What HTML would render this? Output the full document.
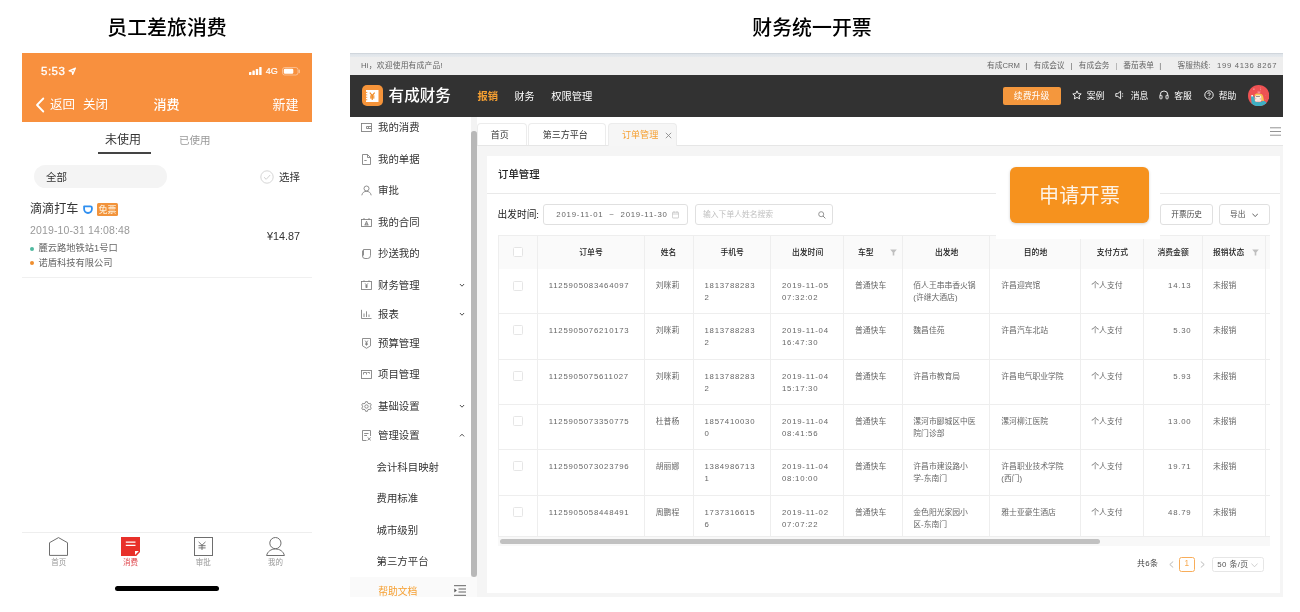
<!DOCTYPE html>
<html lang="zh-CN">
<head>
<meta charset="utf-8">
<title>有成财务</title>
<style>
*{box-sizing:border-box;margin:0;padding:0}
html,body{width:1300px;height:612px;overflow:hidden;background:#fff}
body{position:relative;font-family:"Liberation Sans","Noto Sans CJK SC",sans-serif;color:#333;-webkit-font-smoothing:antialiased}
.abs{position:absolute;white-space:nowrap}
.title{position:absolute;top:12.5px;font-size:19.9px;font-weight:500;color:#000;line-height:30px;text-align:center;white-space:nowrap}
/* phone */
#layer{position:absolute;left:0;top:0;width:1300px;height:612px;will-change:transform}
#phone{position:absolute;left:22px;top:53px;width:290px;height:559px;background:#fff}
#phead{position:absolute;left:0;top:0;width:290px;height:68.5px;background:#f8903e}
#phone .t{position:absolute;white-space:nowrap;line-height:1}
/* web */
#web{position:absolute;left:350px;top:53px;width:933px;height:544px;background:#f5f5f5;overflow:hidden}
#topstrip{position:absolute;left:0;top:0;width:933px;height:22px;background:linear-gradient(#c6ccd3 0,#dfe4e9 1.2px,#e5e9ed 3.8px,#eee 4.2px)}
#nav{position:absolute;left:0;top:22px;width:933px;height:42px;background:#323232}
#side{position:absolute;left:0;top:64px;width:126.5px;height:480px;background:#fff}
#web .t{position:absolute;white-space:nowrap;line-height:1}
.c{font-size:7.8px;color:#666;line-height:12px !important;white-space:nowrap}
.mi{position:absolute;left:29px;font-size:10.5px;color:#333;white-space:nowrap;line-height:1}
.sub{left:28px}
</style>
</head>
<body>
<div id="layer">
<div class="title" style="left:67px;width:200px">员工差旅消费</div>
<div class="title" style="left:712px;width:200px">财务统一开票</div>

<div id="phone">
  <div id="phead"></div>
  <div class="t" style="left:19px;top:13.2px;font-size:11.5px;color:#fff;-webkit-text-stroke:.3px #fff;letter-spacing:.5px">5:53</div>
  <svg class="abs" style="left:46.3px;top:13.8px" width="8.5" height="8.5" viewBox="0 0 8 8"><path d="M7 1 L1 3.6 L3.8 4.2 L4.4 7 Z" fill="#fff" fill-opacity=".25" stroke="#fff" stroke-width="1.15" stroke-linejoin="round"/></svg>
  <svg class="abs" style="left:227px;top:13px" width="14" height="9" viewBox="0 0 14 9"><rect x="0" y="6" width="2.4" height="3" rx=".6" fill="#fff"/><rect x="3.4" y="4.5" width="2.4" height="4.5" rx=".6" fill="#fff"/><rect x="6.8" y="3" width="2.4" height="6" rx=".6" fill="#fff"/><rect x="10.2" y="1" width="2.4" height="8" rx=".6" fill="#fff"/></svg>
  <div class="t" style="left:243.8px;top:14.3px;font-size:9px;-webkit-text-stroke:.2px #fff;color:#fff">4G</div>
  <svg class="abs" style="left:260px;top:14px" width="19" height="9" viewBox="0 0 19 9"><rect x=".5" y=".5" width="15.5" height="7.5" rx="2.2" fill="none" stroke="#fff" stroke-opacity=".4" stroke-width="1"/><rect x="1.8" y="1.8" width="9.5" height="4.9" rx="1.2" fill="#fff"/><path d="M17.3 3 v2.6" stroke="#fff" stroke-opacity=".45" stroke-width="1.2" stroke-linecap="round"/></svg>
  <svg class="abs" style="left:13px;top:44px" width="10" height="16" viewBox="0 0 10 16"><path d="M8.3 1.5 L2 8 L8.3 14.5" fill="none" stroke="#fff" stroke-width="1.8" stroke-linecap="round" stroke-linejoin="round"/></svg>
  <div class="t" style="left:28px;top:46px;font-size:12.5px;color:#fff">返回</div>
  <div class="t" style="left:61px;top:46px;font-size:12.5px;color:#fff">关闭</div>
  <div class="t" style="left:131.5px;top:45.3px;font-size:13px;color:#fff;font-weight:500">消费</div>
  <div class="t" style="left:250.5px;top:45.3px;font-size:13px;color:#fff">新建</div>

  <div class="t" style="left:83px;top:81px;font-size:12px;color:#333">未使用</div>
  <div class="abs" style="left:76px;top:99.4px;width:53px;height:1.3px;background:#444"></div>
  <div class="t" style="left:157px;top:82px;font-size:10.5px;color:#999">已使用</div>

  <div class="abs" style="left:12px;top:112px;width:133px;height:23px;border-radius:12px;background:#f4f4f4"></div>
  <div class="t" style="left:24px;top:119px;font-size:10.5px;color:#333">全部</div>
  <svg class="abs" style="left:238px;top:117px" width="14" height="14" viewBox="0 0 14 14"><circle cx="7" cy="7" r="6.2" fill="none" stroke="#ccc" stroke-width=".8"/><path d="M4 7.2 L6.2 9.3 L10.2 5" fill="none" stroke="#ccc" stroke-width=".9"/></svg>
  <div class="t" style="left:257px;top:119px;font-size:10.5px;color:#333">选择</div>

  <div class="t" style="left:8px;top:149.9px;font-size:12.1px;color:#333">滴滴打车</div>
  <svg class="abs" style="left:61.3px;top:151.6px" width="10" height="9" viewBox="0 0 10 9"><path d="M1.1 1.3 H7.4 A1.5 1.5 0 0 1 8.9 2.8 V4.1 A3.9 3.9 0 0 1 1.1 4.1 Z" fill="none" stroke="#2f8ff0" stroke-width="1.8" stroke-linejoin="round"/></svg>
  <div class="abs" style="left:74.5px;top:150.2px;width:21.6px;height:12.6px;background:#f2933b;border-radius:1.5px"></div>
  <div class="t" style="left:76.5px;top:152.7px;font-size:9px;font-weight:500;color:#fdebd2">免票</div>
  <div class="t" style="left:8px;top:172.2px;font-size:10.5px;letter-spacing:.13px;color:#999">2019-10-31 14:08:48</div>
  <div class="abs" style="left:8px;top:193.5px;width:4px;height:4px;border-radius:2px;background:#4fb99f"></div>
  <div class="t" style="left:16.5px;top:191px;font-size:9.25px;color:#666">麓云路地铁站1号口</div>
  <div class="abs" style="left:8px;top:208px;width:4px;height:4px;border-radius:2px;background:#ef8e2f"></div>
  <div class="t" style="left:16.5px;top:205.5px;font-size:9.25px;color:#666">诺盾科技有限公司</div>
  <div class="t" style="right:12px;top:178px;font-size:10.8px;color:#333">¥14.87</div>
  <div class="abs" style="left:0;top:224px;width:290px;height:1px;background:#f0f0f0"></div>

  <div class="abs" style="left:0;top:479px;width:290px;height:1px;background:#eee"></div>
  <svg class="abs" style="left:26.8px;top:484px" width="19" height="19" viewBox="0 0 19 19"><path d="M.5 5.7 L9.5 .6 L18.5 5.7 V18.4 H.5 Z" fill="none" stroke="#6e6e6e" stroke-width="1"/></svg>
  <div class="t" style="left:29.2px;top:506px;font-size:7.5px;color:#999">首页</div>
  <svg class="abs" style="left:99px;top:484px" width="19" height="19.3" viewBox="0 0 19 19.3"><path d="M0 0 H19 V15 L15 19.3 H0 Z" fill="#e8302a"/><path d="M14 14 H17.9 L14 17.9 Z" fill="#fff"/><path d="M4.8 5.2 H14.5 M4.8 8.4 H14.5" stroke="#fff" stroke-width="1.3"/></svg>
  <div class="t" style="left:101px;top:506px;font-size:7.5px;color:#df444a">消费</div>
  <svg class="abs" style="left:171.7px;top:484px" width="19" height="19" viewBox="0 0 19 19"><rect x=".5" y=".5" width="18" height="18" fill="none" stroke="#6e6e6e" stroke-width="1"/><path d="M4.6 4.9 L8 8.2 L11.5 4.9 M4.5 8.7 H11.6 M4.5 10.9 H11.6 M8 8.2 V13" fill="none" stroke="#666" stroke-width=".9"/></svg>
  <div class="t" style="left:173.8px;top:506px;font-size:7.5px;color:#999">审批</div>
  <svg class="abs" style="left:244px;top:484px" width="19" height="19" viewBox="0 0 19 19"><circle cx="9.4" cy="6.1" r="5.6" fill="none" stroke="#6e6e6e" stroke-width="1"/><path d="M.6 18.5 C1.6 14.4 5 12 9.4 12 C13.9 12 17.4 14.4 18.4 18.5 Z" fill="#fff" stroke="#6e6e6e" stroke-width="1" stroke-linejoin="round"/></svg>
  <div class="t" style="left:246px;top:506px;font-size:7.5px;color:#999">我的</div>
  <div class="abs" style="left:93px;top:533px;width:104px;height:4.5px;border-radius:3px;background:#000"></div>
</div>

<div id="web">
<div id="topstrip"></div>
<div id="nav"></div>
<div class="t" style="left:11.00px;top:9.10px;font-size:7.8px;color:#666;letter-spacing:.18px">Hi，欢迎使用有成产品!</div>
<div class="t" style="left:637.00px;top:9.15px;font-size:7.7px;color:#666;">有成CRM</div>
<div class="t" style="left:675.50px;top:9.15px;font-size:7.7px;color:#666;">|</div>
<div class="t" style="left:683.80px;top:9.15px;font-size:7.7px;color:#666;">有成会议</div>
<div class="t" style="left:720.50px;top:9.15px;font-size:7.7px;color:#666;">|</div>
<div class="t" style="left:728.80px;top:9.15px;font-size:7.7px;color:#666;">有成会务</div>
<div class="t" style="left:765.50px;top:9.15px;font-size:7.7px;color:#666;color:#999;">|</div>
<div class="t" style="left:773.30px;top:9.15px;font-size:7.7px;color:#666;">番茄表单</div>
<div class="t" style="left:809.30px;top:9.15px;font-size:7.7px;color:#666;">|</div>
<div class="t" style="left:827.50px;top:9.15px;font-size:7.7px;color:#666;">客服热线:</div>
<div class="t" style="left:867.00px;top:9.15px;font-size:7.7px;color:#666;letter-spacing:.68px;">199 4136 8267</div>
<div class="abs" style="left:11.50px;top:31.90px;width:21.40px;height:21.30px;background:#f6943a;border-radius:5px"></div>
<svg class="abs" style="left:16px;top:36.7px" width="12.5" height="12.2" viewBox="0 0 13 12.5" preserveAspectRatio="none"><path d="M0 0 H13 V12.5 H0 Z" fill="#fff"/><path d="M4 2.6 L6.5 5.8 L9 2.6 M4.2 6.2 H8.8 M4.2 8 H8.8 M6.5 5.8 V10.3" fill="none" stroke="#f08a24" stroke-width="1.2"/><path d="M0 2.5 h1.3 M0 5 h1.3 M0 7.5 h1.3 M0 10 h1.3" stroke="#f6943a" stroke-width="1"/></svg>
<div class="t" style="left:38.60px;top:34.52px;font-size:15.55px;color:#fff;font-weight:500">有成财务</div>
<div class="t" style="left:127.50px;top:38.95px;font-size:10.3px;color:#f6a032;font-weight:bold">报销</div>
<div class="t" style="left:164.50px;top:39.10px;font-size:10px;color:#fff;">财务</div>
<div class="t" style="left:201.20px;top:38.95px;font-size:10.3px;color:#fff;">权限管理</div>
<div class="abs" style="left:652.50px;top:33.80px;width:58.00px;height:18.20px;background:#f4973d;border-radius:2px"></div>
<div class="t" style="left:663.80px;top:39.35px;font-size:8.9px;color:#fff;">续费升级</div>
<svg class="abs" style="left:721.5px;top:37.3px" width="10" height="10" viewBox="0 0 10 10"><path d="M5 .9 L6.25 3.6 L9.2 3.95 L7 5.95 L7.6 8.9 L5 7.4 L2.4 8.9 L3 5.95 L.8 3.95 L3.75 3.6 Z" fill="none" stroke="#fff" stroke-width=".9" stroke-linejoin="round"/></svg>
<div class="t" style="left:736.80px;top:39.40px;font-size:8.8px;color:#fff;">案例</div>
<svg class="abs" style="left:765px;top:37.3px" width="11" height="10" viewBox="0 0 11 10"><path d="M.8 3.6 H2.8 L5.6 1.2 V8.8 L2.8 6.4 H.8 Z" fill="none" stroke="#fff" stroke-width=".9" stroke-linejoin="round"/><path d="M7.6 3.3 V4.3 M7.6 5.7 V6.7" stroke="#fff" stroke-width=".9"/></svg>
<div class="t" style="left:780.80px;top:39.40px;font-size:8.8px;color:#fff;">消息</div>
<svg class="abs" style="left:809px;top:37.3px" width="10" height="10" viewBox="0 0 10 10"><path d="M1.2 6 V4.8 A3.8 3.8 0 0 1 8.8 4.8 V6" fill="none" stroke="#fff" stroke-width=".9"/><rect x=".9" y="5.3" width="2.1" height="3.5" rx=".6" fill="none" stroke="#fff" stroke-width=".9"/><rect x="7" y="5.3" width="2.1" height="3.5" rx=".6" fill="none" stroke="#fff" stroke-width=".9"/></svg>
<div class="t" style="left:824.30px;top:39.40px;font-size:8.8px;color:#fff;">客服</div>
<svg class="abs" style="left:853.5px;top:37.3px" width="10" height="10" viewBox="0 0 10 10"><circle cx="5" cy="5" r="4.2" fill="none" stroke="#fff" stroke-width=".9"/><path d="M3.7 4 A1.3 1.3 0 1 1 5 5.3 V6.1 M5 7 V7.8" fill="none" stroke="#fff" stroke-width=".8"/></svg>
<div class="t" style="left:868.80px;top:39.40px;font-size:8.8px;color:#fff;">帮助</div>
<svg class="abs" style="left:897.90px;top:31.80px" width="21.3" height="21.3" viewBox="0 0 21.3 21.3"><defs><clipPath id="avc"><circle cx="10.65" cy="10.65" r="10.65"/></clipPath></defs><circle cx="10.65" cy="10.65" r="10.65" fill="#ee5253"/><g clip-path="url(#avc)"><path d="M2.9 11 L6.3 11.6 L7 16.2 C9.5 17.6 13 17.4 15.3 15.8 C17.6 16.3 18.6 17.4 19 18.6 L14.5 22 L7 22 L3.6 18.4 Z" fill="#3eb0c4"/><rect x="3.3" y="10" width="1.7" height="1.4" rx=".5" fill="#fff"/><path d="M6.4 10.8 C6.6 8.9 8.3 8.5 10.2 8.6 C12.8 8.6 14.6 9.3 15.2 11.5 L16 16 L13.4 15.8 L13.2 10.8 Z" fill="#f7c84e"/><rect x="6.9" y="10.2" width="6.5" height="6.6" rx="1.6" fill="#fbeee4"/><path d="M7.9 11.5 H11.9" stroke="#666" stroke-width=".7"/><circle cx="7.6" cy="13.6" r=".85" fill="#f9b9ab"/><circle cx="12.4" cy="13.8" r=".85" fill="#f9b9ab"/><path d="M9.6 14.8 V16.6 M11 14.8 V16.6" stroke="#e8cfc4" stroke-width=".5"/><path d="M9.4 5.7 L10.3 7 L10.9 5.6 L11.6 7 L12.4 5.7 L12.2 8.5 H9.7 Z" fill="#f58c92"/><circle cx="5.9" cy="4.1" r=".7" fill="#f7c4c4"/><circle cx="12.5" cy="2.9" r=".45" fill="#f7c4c4"/><circle cx="12.5" cy="4.7" r=".45" fill="#f7c4c4"/><circle cx="17.5" cy="10.6" r=".4" fill="#c98a8a"/><circle cx="17.5" cy="14.7" r=".4" fill="#c98a8a"/></g></svg>
<div id="side"></div>
<div class="abs" style="left:0.00px;top:524.00px;width:126.80px;height:20.00px;background:#fafafa"></div>
<div class="abs" style="left:121.30px;top:64.00px;width:5.50px;height:460.00px;background:#f3f3f3"></div>
<div class="abs" style="left:121.30px;top:78.00px;width:5.40px;height:446.00px;background:#b8b8b8;border-radius:2.7px 2.7px 3px 3px"></div>
<div class="t" style="left:28.10px;top:70.40px;font-size:10.4px;color:#333;">我的消费</div>
<div class="t" style="left:28.10px;top:102.00px;font-size:10.4px;color:#333;">我的单据</div>
<div class="t" style="left:28.10px;top:133.40px;font-size:10.4px;color:#333;">审批</div>
<div class="t" style="left:28.10px;top:165.00px;font-size:10.4px;color:#333;">我的合同</div>
<div class="t" style="left:28.10px;top:196.30px;font-size:10.4px;color:#333;">抄送我的</div>
<div class="t" style="left:28.10px;top:227.80px;font-size:10.4px;color:#333;">财务管理</div>
<div class="t" style="left:28.10px;top:256.80px;font-size:10.4px;color:#333;">报表</div>
<div class="t" style="left:28.10px;top:286.10px;font-size:10.4px;color:#333;">预算管理</div>
<div class="t" style="left:28.10px;top:317.30px;font-size:10.4px;color:#333;">项目管理</div>
<div class="t" style="left:28.10px;top:348.80px;font-size:10.4px;color:#333;">基础设置</div>
<div class="t" style="left:28.10px;top:378.10px;font-size:10.4px;color:#333;">管理设置</div>
<div class="t" style="left:26.60px;top:410.00px;font-size:10.4px;color:#333;">会计科目映射</div>
<div class="t" style="left:26.60px;top:441.10px;font-size:10.4px;color:#333;">费用标准</div>
<div class="t" style="left:26.60px;top:472.60px;font-size:10.4px;color:#333;">城市级别</div>
<div class="t" style="left:26.60px;top:504.10px;font-size:10.4px;color:#333;">第三方平台</div>
<div class="t" style="left:28.20px;top:533.50px;font-size:9.8px;color:#f6a032;">帮助文档</div>
<svg class="abs" style="left:11px;top:69px" width="11" height="11" viewBox="0 0 11 11"><rect x=".5" y="1.5" width="10" height="8" fill="none" stroke="#7c7c7c" stroke-width=".85"/><path d="M10.5 4.5 H5.5 V6.5 H10.5 M7 5.5 H8" fill="none" stroke="#7c7c7c" stroke-width=".85"/></svg>
<svg class="abs" style="left:11px;top:101px" width="11" height="11" viewBox="0 0 11 11"><path d="M1.5 .5 H6.5 L9.5 3.5 V10.5 H1.5 Z M6.5 .5 V3.5 H9.5 M3.3 6.5 H5.7" fill="none" stroke="#7c7c7c" stroke-width=".85"/></svg>
<svg class="abs" style="left:11px;top:132px" width="11" height="11" viewBox="0 0 11 11"><circle cx="5.5" cy="3.5" r="2.5" fill="none" stroke="#7c7c7c" stroke-width=".85"/><path d="M.8 10.3 C1.3 7.6 3.2 6.3 5.5 6.3 C7.8 6.3 9.7 7.6 10.2 10.3" fill="none" stroke="#7c7c7c" stroke-width=".85"/></svg>
<svg class="abs" style="left:11px;top:164px" width="11" height="11" viewBox="0 0 11 11"><rect x=".5" y="2.5" width="10" height="7" fill="none" stroke="#7c7c7c" stroke-width=".85"/><path d="M3 2.5 V1 M8 2.5 V1 M4.1 8 L5.5 4.2 L6.9 8 M4.6 6.8 H6.4 M3.5 8 H7.5" fill="none" stroke="#7c7c7c" stroke-width=".85"/></svg>
<svg class="abs" style="left:11px;top:195px" width="11" height="11" viewBox="0 0 11 11"><path d="M2.5 1.5 H9.5 V7.5 A3 3 0 0 1 6.5 10.5 H4 A2.5 2.5 0 0 1 1.5 8 V2.5 M2.5 1.5 V7.5" fill="none" stroke="#7c7c7c" stroke-width=".85"/></svg>
<svg class="abs" style="left:11px;top:227px" width="11" height="11" viewBox="0 0 11 11"><rect x=".5" y="1.5" width="10" height="8" fill="none" stroke="#7c7c7c" stroke-width=".85"/><path d="M3 1.5 V.3 M8 1.5 V.3 M4.1 3.4 L5.5 5.1 L6.9 3.4 M5.5 5.1 V8 M4.2 5.8 H6.8 M4.2 7 H6.8" fill="none" stroke="#7c7c7c" stroke-width=".85"/></svg>
<svg class="abs" style="left:11px;top:256px" width="11" height="11" viewBox="0 0 11 11"><path d="M.5 .8 V9.5 H10.5 M3 8 V4.5 M5.5 8 V2.3 M8 8 V5.5" fill="none" stroke="#7c7c7c" stroke-width=".85"/></svg>
<svg class="abs" style="left:11px;top:285px" width="11" height="11" viewBox="0 0 11 11"><path d="M1.5 .5 H9.5 V7.8 L5.5 10.3 L1.5 7.8 Z M4.1 2.6 L5.5 4.4 L6.9 2.6 M5.5 4.4 V7.6 M4.2 5.2 H6.8 M4.2 6.4 H6.8" fill="none" stroke="#7c7c7c" stroke-width=".85"/></svg>
<svg class="abs" style="left:11px;top:316px" width="11" height="11" viewBox="0 0 11 11"><rect x=".5" y="1.5" width="10" height="8" fill="none" stroke="#7c7c7c" stroke-width=".85"/><path d="M2.5 5.5 V3.5 H5.5 V5.5 M6.5 3.5 H8.5 V4.6" fill="none" stroke="#7c7c7c" stroke-width=".85"/></svg>
<svg class="abs" style="left:11px;top:348px" width="11" height="11" viewBox="0 0 11 11"><circle cx="5.5" cy="5.5" r="1.7" fill="none" stroke="#7c7c7c" stroke-width=".85"/><path d="M4.6 .7 H6.4 L6.8 2.1 L8 2.8 L9.4 2.4 L10.3 4 L9.3 5 V6 L10.3 7 L9.4 8.6 L8 8.2 L6.8 8.9 L6.4 10.3 H4.6 L4.2 8.9 L3 8.2 L1.6 8.6 L.7 7 L1.7 6 V5 L.7 4 L1.6 2.4 L3 2.8 L4.2 2.1 Z" fill="none" stroke="#7c7c7c" stroke-width=".85" stroke-linejoin="round"/></svg>
<svg class="abs" style="left:11px;top:377px" width="11" height="11" viewBox="0 0 11 11"><path d="M1.5 .5 H9.5 V6 M1.5 .5 V10.5 H5.5 M3.2 3.5 H7.5 M3.2 5.5 H6 M6.6 7.4 L9.8 10.4 M9.8 7.4 L6.6 10.4" fill="none" stroke="#7c7c7c" stroke-width=".85"/></svg>
<svg class="abs" style="left:109px;top:229.50px" width="6" height="4.5" viewBox="0 0 6 4.5"><path d="M.9 1 L3 3.2 L5.1 1" fill="none" stroke="#505050" stroke-width="1"/></svg>
<svg class="abs" style="left:109px;top:258.50px" width="6" height="4.5" viewBox="0 0 6 4.5"><path d="M.9 1 L3 3.2 L5.1 1" fill="none" stroke="#505050" stroke-width="1"/></svg>
<svg class="abs" style="left:109px;top:350.50px" width="6" height="4.5" viewBox="0 0 6 4.5"><path d="M.9 1 L3 3.2 L5.1 1" fill="none" stroke="#505050" stroke-width="1"/></svg>
<svg class="abs" style="left:109px;top:379.80px" width="6" height="4.5" viewBox="0 0 6 4.5"><path d="M.9 3.4 L3 1.2 L5.1 3.4" fill="none" stroke="#505050" stroke-width="1"/></svg>
<svg class="abs" style="left:104px;top:532px" width="12" height="11" viewBox="0 0 12 11"><path d="M0 .7 H12 M4.5 4 H12 M4.5 7 H12 M0 10.3 H12" stroke="#555" stroke-width=".9" fill="none"/><path d="M.3 3.4 L2.8 5.5 L.3 7.6 Z" fill="#555"/></svg>
<div class="abs" style="left:127.00px;top:64.00px;width:806.00px;height:28.50px;background:#fff;border-bottom:1px solid #e6e6e6"></div>
<div class="abs" style="left:126.80px;top:70.20px;width:50.00px;height:22.30px;background:#fff;border:1px solid #ececec;border-bottom:0;border-radius:4px 4px 0 0"></div>
<div class="abs" style="left:178.30px;top:70.20px;width:77.70px;height:22.30px;background:#fff;border:1px solid #ececec;border-bottom:0;border-radius:4px 4px 0 0"></div>
<div class="abs" style="left:257.80px;top:70.20px;width:69.20px;height:22.80px;background:#f6f6f6;border:1px solid #ececec;border-bottom:0;border-radius:4px 4px 0 0"></div>
<div class="t" style="left:140.80px;top:77.78px;font-size:9.05px;color:#333;">首页</div>
<div class="t" style="left:192.70px;top:77.78px;font-size:9.05px;color:#333;">第三方平台</div>
<div class="t" style="left:272.00px;top:77.78px;font-size:9.05px;color:#f6a032;">订单管理</div>
<svg class="abs" style="left:314.5px;top:78.5px" width="7" height="7" viewBox="0 0 7 7"><path d="M.8 .8 L6.2 6.2 M6.2 .8 L.8 6.2" stroke="#888" stroke-width=".85"/></svg>
<svg class="abs" style="left:919.5px;top:73.5px" width="11" height="9" viewBox="0 0 11 9"><path d="M0 .8 H11 M0 4.5 H11 M0 8.2 H11" stroke="#888" stroke-width=".9"/></svg>
<div class="abs" style="left:137.00px;top:102.80px;width:793.00px;height:437.20px;background:#fff"></div>
<div class="t" style="left:148.00px;top:117.30px;font-size:10.4px;color:#222;font-weight:500">订单管理</div>
<div class="abs" style="left:137.00px;top:139.80px;width:793.00px;height:1.00px;background:#e9e9e9"></div>
<div class="t" style="left:147.60px;top:156.65px;font-size:9.7px;color:#222;">出发时间:</div>
<div class="abs" style="left:193.30px;top:151.00px;width:144.70px;height:21.00px;background:#fff;border:1px solid #e0e0e0;border-radius:3px"></div>
<div class="t" style="left:206.30px;top:157.80px;font-size:7.8px;color:#666;letter-spacing:.78px">2019-11-01&nbsp; ~ &nbsp;2019-11-30</div>
<svg class="abs" style="left:322px;top:158px" width="7" height="7.5" viewBox="0 0 7 7.5"><rect x=".4" y="1.2" width="6.2" height="5.8" rx=".6" fill="none" stroke="#bbb" stroke-width=".7"/><path d="M.4 3 H6.6 M2 .2 V1.8 M5 .2 V1.8" stroke="#bbb" stroke-width=".7"/></svg>
<div class="abs" style="left:345.30px;top:151.00px;width:137.40px;height:21.00px;background:#fff;border:1px solid #e0e0e0;border-radius:3px"></div>
<div class="t" style="left:353.00px;top:157.80px;font-size:7.8px;color:#bfbfbf;">输入下单人姓名搜索</div>
<svg class="abs" style="left:467.5px;top:157.8px" width="8" height="8" viewBox="0 0 8 8"><circle cx="3.2" cy="3.2" r="2.5" fill="none" stroke="#8a8a8a" stroke-width=".9"/><path d="M5 5 L7.4 7.4" stroke="#8a8a8a" stroke-width="1"/></svg>
<div class="abs" style="left:810.00px;top:151.00px;width:53.00px;height:21.00px;background:#fff;border:1px solid #e0e0e0;border-radius:3px"></div>
<div class="t" style="left:821.30px;top:157.95px;font-size:7.7px;color:#444;">开票历史</div>
<div class="abs" style="left:869.00px;top:151.00px;width:51.00px;height:21.00px;background:#fff;border:1px solid #e0e0e0;border-radius:3px"></div>
<div class="t" style="left:880.00px;top:157.95px;font-size:7.7px;color:#555;">导出</div>
<svg class="abs" style="left:902px;top:160px" width="6.4" height="4.5" viewBox="0 0 6.4 4.5"><path d="M.4 .6 L3.2 3.6 L6 .6" fill="none" stroke="#555" stroke-width=".9"/></svg>
<div class="abs" style="left:148.00px;top:182.50px;width:772.00px;height:33.30px;background:#fafafa"></div>
<div class="abs" style="left:148.00px;top:182.00px;width:772.00px;height:1.00px;background:#eeeeee"></div>
<div class="abs" style="left:148.00px;top:259.80px;width:772.00px;height:1.00px;background:#eeeeee"></div>
<div class="abs" style="left:148.00px;top:305.80px;width:772.00px;height:1.00px;background:#eeeeee"></div>
<div class="abs" style="left:148.00px;top:350.80px;width:772.00px;height:1.00px;background:#eeeeee"></div>
<div class="abs" style="left:148.00px;top:395.80px;width:772.00px;height:1.00px;background:#eeeeee"></div>
<div class="abs" style="left:148.00px;top:441.80px;width:772.00px;height:1.00px;background:#eeeeee"></div>
<div class="abs" style="left:148.00px;top:483.00px;width:772.00px;height:1.00px;background:#eeeeee"></div>
<div class="abs" style="left:147.50px;top:182.50px;width:1.00px;height:301.00px;background:#eeeeee"></div>
<div class="abs" style="left:187.00px;top:182.50px;width:1.00px;height:301.00px;background:#eeeeee"></div>
<div class="abs" style="left:293.80px;top:182.50px;width:1.00px;height:301.00px;background:#eeeeee"></div>
<div class="abs" style="left:342.80px;top:182.50px;width:1.00px;height:301.00px;background:#eeeeee"></div>
<div class="abs" style="left:419.80px;top:182.50px;width:1.00px;height:301.00px;background:#eeeeee"></div>
<div class="abs" style="left:493.00px;top:182.50px;width:1.00px;height:301.00px;background:#eeeeee"></div>
<div class="abs" style="left:552.00px;top:182.50px;width:1.00px;height:301.00px;background:#eeeeee"></div>
<div class="abs" style="left:639.00px;top:182.50px;width:1.00px;height:301.00px;background:#eeeeee"></div>
<div class="abs" style="left:730.00px;top:182.50px;width:1.00px;height:301.00px;background:#eeeeee"></div>
<div class="abs" style="left:793.30px;top:182.50px;width:1.00px;height:301.00px;background:#eeeeee"></div>
<div class="abs" style="left:852.00px;top:182.50px;width:1.00px;height:301.00px;background:#eeeeee"></div>
<div class="abs" style="left:915.00px;top:182.50px;width:1.00px;height:301.00px;background:#eeeeee"></div>
<div class="t" style="left:229.30px;top:195.90px;font-size:7.8px;color:#222;font-weight:500">订单号</div>
<div class="t" style="left:310.80px;top:195.90px;font-size:7.8px;color:#222;font-weight:500">姓名</div>
<div class="t" style="left:370.50px;top:195.90px;font-size:7.8px;color:#222;font-weight:500">手机号</div>
<div class="t" style="left:442.00px;top:195.90px;font-size:7.8px;color:#222;font-weight:500">出发时间</div>
<div class="t" style="left:508.00px;top:195.90px;font-size:7.8px;color:#222;font-weight:500">车型</div>
<div class="t" style="left:585.00px;top:195.90px;font-size:7.8px;color:#222;font-weight:500">出发地</div>
<div class="t" style="left:673.80px;top:195.90px;font-size:7.8px;color:#222;font-weight:500">目的地</div>
<div class="t" style="left:746.80px;top:195.90px;font-size:7.8px;color:#222;font-weight:500">支付方式</div>
<div class="t" style="left:807.50px;top:195.90px;font-size:7.8px;color:#222;font-weight:500">消费金额</div>
<div class="t" style="left:863.00px;top:195.90px;font-size:7.8px;color:#222;font-weight:500">报销状态</div>
<svg class="abs" style="left:539.50px;top:196.00px" width="7" height="7" viewBox="0 0 7 7"><path d="M.2 .6 H6.8 L4.3 3.6 V6.6 H2.7 V3.6 Z" fill="#bfbfbf"/></svg>
<svg class="abs" style="left:902.00px;top:196.00px" width="7" height="7" viewBox="0 0 7 7"><path d="M.2 .6 H6.8 L4.3 3.6 V6.6 H2.7 V3.6 Z" fill="#bfbfbf"/></svg>
<div class="abs" style="left:163.30px;top:194.20px;width:10.00px;height:10.00px;background:#fff;border:1px solid #e4e4e4;border-radius:1.5px"></div>
<div class="abs" style="left:163.30px;top:227.50px;width:10.00px;height:10.00px;background:#fff;border:1px solid #e6e6e6;border-radius:1.5px"></div>
<div class="t c" style="left:198.80px;top:227.20px;letter-spacing:.74px;">1125905083464097</div>
<div class="t c" style="left:305.80px;top:227.20px;">刘咪莉</div>
<div class="t c" style="left:354.50px;top:227.20px;letter-spacing:.74px;">1813788283<br>2</div>
<div class="t c" style="left:432.00px;top:227.20px;letter-spacing:.74px;">2019-11-05<br>07:32:02</div>
<div class="t c" style="left:505.00px;top:227.20px;">普通快车</div>
<div class="t c" style="left:563.30px;top:227.20px;">佰人王串串香火锅<br>(许继大酒店)</div>
<div class="t c" style="left:651.30px;top:227.20px;">许昌迎宾馆</div>
<div class="t c" style="left:741.30px;top:227.20px;">个人支付</div>
<div class="t c" style="right:91.70px;top:227.20px;letter-spacing:.74px;">14.13</div>
<div class="t c" style="left:863.00px;top:227.20px;">未报销</div>
<div class="abs" style="left:163.30px;top:272.00px;width:10.00px;height:10.00px;background:#fff;border:1px solid #e6e6e6;border-radius:1.5px"></div>
<div class="t c" style="left:198.80px;top:271.70px;letter-spacing:.74px;">1125905076210173</div>
<div class="t c" style="left:305.80px;top:271.70px;">刘咪莉</div>
<div class="t c" style="left:354.50px;top:271.70px;letter-spacing:.74px;">1813788283<br>2</div>
<div class="t c" style="left:432.00px;top:271.70px;letter-spacing:.74px;">2019-11-04<br>16:47:30</div>
<div class="t c" style="left:505.00px;top:271.70px;">普通快车</div>
<div class="t c" style="left:563.30px;top:271.70px;">魏昌佳苑</div>
<div class="t c" style="left:651.30px;top:271.70px;">许昌汽车北站</div>
<div class="t c" style="left:741.30px;top:271.70px;">个人支付</div>
<div class="t c" style="right:91.70px;top:271.70px;letter-spacing:.74px;">5.30</div>
<div class="t c" style="left:863.00px;top:271.70px;">未报销</div>
<div class="abs" style="left:163.30px;top:318.00px;width:10.00px;height:10.00px;background:#fff;border:1px solid #e6e6e6;border-radius:1.5px"></div>
<div class="t c" style="left:198.80px;top:317.70px;letter-spacing:.74px;">1125905075611027</div>
<div class="t c" style="left:305.80px;top:317.70px;">刘咪莉</div>
<div class="t c" style="left:354.50px;top:317.70px;letter-spacing:.74px;">1813788283<br>2</div>
<div class="t c" style="left:432.00px;top:317.70px;letter-spacing:.74px;">2019-11-04<br>15:17:30</div>
<div class="t c" style="left:505.00px;top:317.70px;">普通快车</div>
<div class="t c" style="left:563.30px;top:317.70px;">许昌市教育局</div>
<div class="t c" style="left:651.30px;top:317.70px;">许昌电气职业学院</div>
<div class="t c" style="left:741.30px;top:317.70px;">个人支付</div>
<div class="t c" style="right:91.70px;top:317.70px;letter-spacing:.74px;">5.93</div>
<div class="t c" style="left:863.00px;top:317.70px;">未报销</div>
<div class="abs" style="left:163.30px;top:363.00px;width:10.00px;height:10.00px;background:#fff;border:1px solid #e6e6e6;border-radius:1.5px"></div>
<div class="t c" style="left:198.80px;top:362.70px;letter-spacing:.74px;">1125905073350775</div>
<div class="t c" style="left:305.80px;top:362.70px;">杜普杨</div>
<div class="t c" style="left:354.50px;top:362.70px;letter-spacing:.74px;">1857410030<br>0</div>
<div class="t c" style="left:432.00px;top:362.70px;letter-spacing:.74px;">2019-11-04<br>08:41:56</div>
<div class="t c" style="left:505.00px;top:362.70px;">普通快车</div>
<div class="t c" style="left:563.30px;top:362.70px;">漯河市郾城区中医<br>院门诊部</div>
<div class="t c" style="left:651.30px;top:362.70px;">漯河柳江医院</div>
<div class="t c" style="left:741.30px;top:362.70px;">个人支付</div>
<div class="t c" style="right:91.70px;top:362.70px;letter-spacing:.74px;">13.00</div>
<div class="t c" style="left:863.00px;top:362.70px;">未报销</div>
<div class="abs" style="left:163.30px;top:408.00px;width:10.00px;height:10.00px;background:#fff;border:1px solid #e6e6e6;border-radius:1.5px"></div>
<div class="t c" style="left:198.80px;top:407.70px;letter-spacing:.74px;">1125905073023796</div>
<div class="t c" style="left:305.80px;top:407.70px;">胡丽娜</div>
<div class="t c" style="left:354.50px;top:407.70px;letter-spacing:.74px;">1384986713<br>1</div>
<div class="t c" style="left:432.00px;top:407.70px;letter-spacing:.74px;">2019-11-04<br>08:10:00</div>
<div class="t c" style="left:505.00px;top:407.70px;">普通快车</div>
<div class="t c" style="left:563.30px;top:407.70px;">许昌市建设路小<br>学-东南门</div>
<div class="t c" style="left:651.30px;top:407.70px;">许昌职业技术学院<br>(西门)</div>
<div class="t c" style="left:741.30px;top:407.70px;">个人支付</div>
<div class="t c" style="right:91.70px;top:407.70px;letter-spacing:.74px;">19.71</div>
<div class="t c" style="left:863.00px;top:407.70px;">未报销</div>
<div class="abs" style="left:163.30px;top:454.00px;width:10.00px;height:10.00px;background:#fff;border:1px solid #e6e6e6;border-radius:1.5px"></div>
<div class="t c" style="left:198.80px;top:453.70px;letter-spacing:.74px;">1125905058448491</div>
<div class="t c" style="left:305.80px;top:453.70px;">周鹏程</div>
<div class="t c" style="left:354.50px;top:453.70px;letter-spacing:.74px;">1737316615<br>6</div>
<div class="t c" style="left:432.00px;top:453.70px;letter-spacing:.74px;">2019-11-02<br>07:07:22</div>
<div class="t c" style="left:505.00px;top:453.70px;">普通快车</div>
<div class="t c" style="left:563.30px;top:453.70px;">金色阳光家园小<br>区-东南门</div>
<div class="t c" style="left:651.30px;top:453.70px;">雅士亚豪生酒店</div>
<div class="t c" style="left:741.30px;top:453.70px;">个人支付</div>
<div class="t c" style="right:91.70px;top:453.70px;letter-spacing:.74px;">48.79</div>
<div class="t c" style="left:863.00px;top:453.70px;">未报销</div>
<div class="abs" style="left:148.00px;top:484.00px;width:772.00px;height:8.60px;background:#f8f8f8"></div>
<div class="abs" style="left:150.00px;top:486.00px;width:600.00px;height:5.00px;background:#c1c1c1;border-radius:2.5px"></div>
<div class="t" style="left:787.00px;top:507.35px;font-size:7.9px;color:#444;letter-spacing:.35px">共6条</div>
<svg class="abs" style="left:818.7px;top:508px" width="5" height="7" viewBox="0 0 5 7"><path d="M4.2 .5 L.8 3.5 L4.2 6.5" fill="none" stroke="#aaa" stroke-width=".8"/></svg>
<div class="abs" style="left:829.00px;top:503.60px;width:15.50px;height:15.70px;background:#fff;border:1px solid #f8ad5a;border-radius:2.5px"></div>
<div class="t" style="left:834.40px;top:507.40px;font-size:8.2px;color:#f7a84e;">1</div>
<svg class="abs" style="left:850.3px;top:508px" width="5" height="7" viewBox="0 0 5 7"><path d="M.8 .5 L4.2 3.5 L.8 6.5" fill="none" stroke="#aaa" stroke-width=".8"/></svg>
<div class="abs" style="left:861.80px;top:503.60px;width:52.00px;height:15.70px;background:#fff;border:1px solid #e6e6e6;border-radius:2.5px"></div>
<div class="t" style="left:867.30px;top:507.55px;font-size:7.9px;color:#555;letter-spacing:.4px">50 条/页</div>
<svg class="abs" style="left:901.3px;top:509.5px" width="7" height="4.5" viewBox="0 0 7 4.5"><path d="M.4 .5 L3.5 3.8 L6.6 .5" fill="none" stroke="#bbb" stroke-width=".7"/></svg>
<div class="abs" style="left:646.00px;top:102.80px;width:164.00px;height:83.20px;background:#fff"></div>
<div class="abs" style="left:660.00px;top:114.40px;width:139.20px;height:56.00px;background:#f6921e;border-radius:6px;box-shadow:0 1px 3px rgba(0,0,0,.18)"></div>
<div class="t" style="left:689.00px;top:133.20px;font-size:20px;color:#fdf3e6;letter-spacing:.3px">申请开票</div>
</div>
</div>
</body>
</html>
